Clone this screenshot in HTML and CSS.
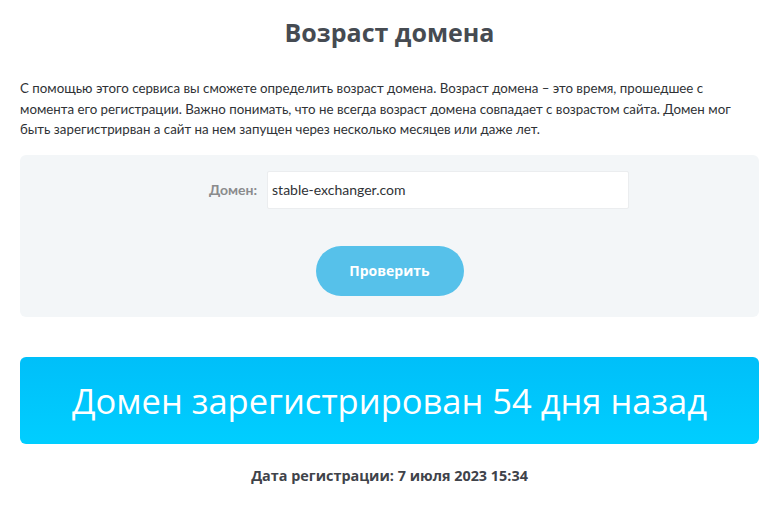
FILE: index.html
```html
<!DOCTYPE html>
<html lang="ru">
<head>
<meta charset="utf-8">
<title>Возраст домена</title>
<link rel="stylesheet" href="styles.css">
</head>
<body>
<main class="page">
  <h1 class="title">Возраст домена</h1>
  <p class="intro">С помощью этого сервиса вы сможете определить возраст домена. Возраст домена – это время, прошедшее с<br>момента его регистрации. Важно понимать, что не всегда возраст домена совпадает с возрастом сайта. Домен мог<br>быть зарегистрирван а сайт на нем запущен через несколько месяцев или даже лет.</p>
  <form class="check-form">
    <div class="field">
      <label class="field-label" for="domain">Домен:</label>
      <input class="field-input" id="domain" type="text" value="stable-exchanger.com">
    </div>
    <button class="check-btn" type="button">Проверить</button>
  </form>
  <div class="result">Домен зарегистрирован 54 дня назад</div>
  <p class="reg-date">Дата регистрации: 7 июля 2023 15:34</p>
</main>
</body>
</html>
```
FILE: styles.css
```css
html, body {
  margin: 0;
  padding: 0;
  background: #ffffff;
}
body {
  font-family: "Lato", "Open Sans", sans-serif;
  color: #333;
}
.page {
  padding: 0 21px 0 20px;
}
.title {
  margin: 0;
  padding-top: 16px;
  height: 34px;
  line-height: 32px;
  text-align: center;
  font-family: "Open Sans", sans-serif;
  font-weight: 700;
  font-size: 25px;
  color: #464b52;
}
.intro {
  margin: 28px 0 0;
  font-size: 13.3px;
  line-height: 20.5px;
  color: #2f3236;
  white-space: nowrap;
}
.check-form {
  margin-top: 15px;
  background: #f3f6f8;
  border-radius: 6px;
  height: 162px;
  box-sizing: border-box;
  padding-top: 16px;
  display: flex;
  flex-direction: column;
  align-items: center;
}
.field {
  display: flex;
  align-items: center;
  gap: 10px;
  margin-left: 59px;
}
.field-label {
  font-size: 14px;
  font-weight: 700;
  color: #8a8b8d;
}
.field-input {
  width: 362px;
  height: 38px;
  box-sizing: border-box;
  border: 1px solid #ebedef;
  border-radius: 2px;
  background: #fff;
  padding: 0 4px;
  font-family: "Lato", "Open Sans", sans-serif;
  font-size: 14px;
  color: #2f3236;
  outline: none;
}
.check-btn {
  margin-top: 37px;
  width: 148px;
  height: 50px;
  border: 0;
  border-radius: 25px;
  background: #56c1ea;
  color: #fff;
  font-family: "Open Sans", sans-serif;
  font-weight: 700;
  font-size: 14px;
}
.result {
  margin-top: 40px;
  height: 87px;
  border-radius: 6px;
  background: linear-gradient(180deg, #00bff9 0%, #00ceff 100%);
  color: #fff;
  font-family: "Open Sans", sans-serif;
  font-weight: 400;
  font-size: 34.5px;
  display: flex;
  align-items: center;
  justify-content: center;
}
.reg-date {
  margin: 22px 0 0;
  text-align: center;
  font-family: "Open Sans", sans-serif;
  font-weight: 700;
  font-size: 14.4px;
  color: #3f434a;
}
```
